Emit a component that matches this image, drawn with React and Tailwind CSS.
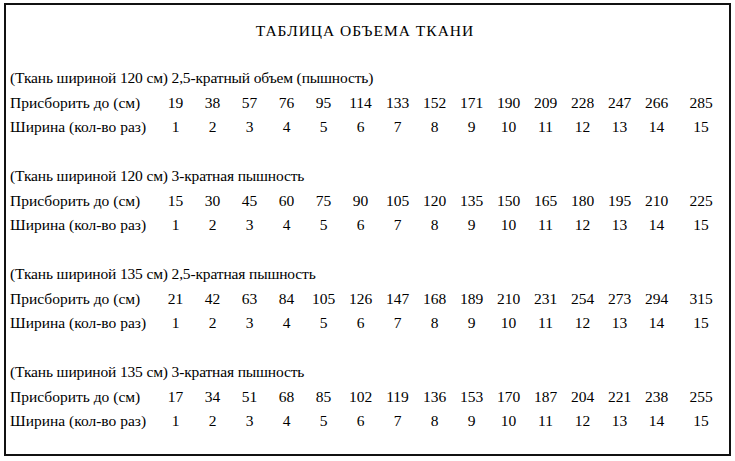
import React from "react";

const sections = [
  {
    title: "(Ткань шириной 120 см) 2,5-кратный объем (пышность)",
    values: [19, 38, 57, 76, 95, 114, 133, 152, 171, 190, 209, 228, 247, 266, 285],
  },
  {
    title: "(Ткань шириной 120 см) 3-кратная пышность",
    values: [15, 30, 45, 60, 75, 90, 105, 120, 135, 150, 165, 180, 195, 210, 225],
  },
  {
    title: "(Ткань шириной 135 см) 2,5-кратная пышность",
    values: [21, 42, 63, 84, 105, 126, 147, 168, 189, 210, 231, 254, 273, 294, 315],
  },
  {
    title: "(Ткань шириной 135 см) 3-кратная пышность",
    values: [17, 34, 51, 68, 85, 102, 119, 136, 153, 170, 187, 204, 221, 238, 255],
  },
];

const widths = Array.from({ length: 15 }, (_, i) => i + 1);

function Row({ label, values }) {
  return (
    <div className="grid grid-cols-[147px_repeat(14,37px)_52px] h-[24px] items-center">
      <div className="whitespace-nowrap">{label}</div>
      {values.map((v, i) => (
        <div key={i} className="text-center">
          {v}
        </div>
      ))}
    </div>
  );
}

export default function App() {
  return (
    <div className="w-[735px] h-[461px] bg-white pt-[3px] pl-[4px] text-black text-[15.5px] leading-[24px] font-['Liberation_Serif',serif]">
      <div className="w-[727px] h-[453px] border-2 border-[#111111] pl-[4px] pt-[13px]">
        <div className="h-[25px] flex items-center justify-center tracking-[1px] pr-[9px]">
          ТАБЛИЦА ОБЪЕМА ТКАНИ
        </div>
        <div className="mt-[21px] flex flex-col gap-[23px]">
          {sections.map((s, i) => (
            <div key={i} className="flex flex-col">
              <div className="h-[27px] flex items-center whitespace-nowrap tracking-[-0.15px]">{s.title}</div>
              <Row label="Присборить до (см)" values={s.values} />
              <Row label="Ширина (кол-во раз)" values={widths} />
            </div>
          ))}
        </div>
      </div>
    </div>
  );
}
